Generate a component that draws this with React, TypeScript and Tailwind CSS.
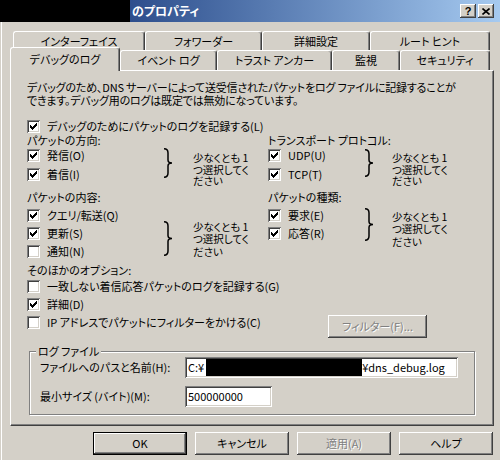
import React from 'react';

// classic 3D bevels
const raised =
  'shadow-[inset_-1px_-1px_#404040,inset_1px_1px_#ffffff,inset_-2px_-2px_#808080,inset_2px_2px_#d4d0c8]';
const sunken =
  'shadow-[inset_1px_1px_#808080,inset_-1px_-1px_#ffffff,inset_2px_2px_#404040,inset_-2px_-2px_#d4d0c8]';
const tabBase =
  'bg-[#d4d0c8] flex items-center justify-center border-l border-t border-white border-r border-r-[#404040] rounded-t-[3px] shadow-[inset_-1px_0_#808080] whitespace-nowrap';

const CheckMark = () => (
  <svg width="7" height="7" viewBox="0 0 7 7">
    {[2, 3, 4, 3, 2, 1, 0].map((y, x) => (
      <rect key={x} x={x} y={y} width="1" height="3" fill="#000" />
    ))}
  </svg>
);

const Check = ({ checked }: { checked: boolean }) => (
  <span className={`w-[13px] h-[13px] bg-white shrink-0 flex items-center justify-center ${sunken}`}>
    {checked && <CheckMark />}
  </span>
);

const CheckRow = ({ checked, label, h = 'h-[18px]' }: { checked: boolean; label: string; h?: string }) => (
  <div className={`flex items-center gap-[7px] whitespace-nowrap ${h}`}>
    <Check checked={checked} />
    <span>{label}</span>
  </div>
);

const Brace = ({ h, className = '' }: { h: number; className?: string }) => {
  const m = h / 2;
  return (
    <svg width="10" height={h} viewBox={`0 0 10 ${h}`} className={`shrink-0 ${className}`}>
      <path
        d={`M1 0.8 C4 0.8 5 2 5 5 L5 ${m - 3} C5 ${m - 1} 6 ${m} 9 ${m} C6 ${m} 5 ${m + 1} 5 ${m + 3} L5 ${h - 5} C5 ${h - 2} 4 ${h - 0.8} 1 ${h - 0.8}`}
        fill="none"
        stroke="#000"
        strokeWidth="1.5"
      />
    </svg>
  );
};

const Hint = ({ className }: { className: string }) => (
  <div className={`whitespace-nowrap text-[10.5px] ${className}`}>
    少なくとも 1
    <br />
    つ選択してく
    <br />
    ださい
  </div>
);

const Button = ({ children, disabled = false, def = false }: { children: React.ReactNode; disabled?: boolean; def?: boolean }) => (
  <div
    className={`w-[94px] h-[23px] flex items-center justify-center ${def ? 'border border-black' : ''} ${raised} ${
      disabled ? 'text-[#808080] [text-shadow:1px_1px_#ffffff]' : ''
    }`}
  >
    {children}
  </div>
);

export default function App() {
  return (
    <div className="w-[500px] h-[460px] bg-[#d4d0c8] overflow-hidden font-['Noto_Sans_CJK_JP',sans-serif] text-[11px] leading-none text-black [font-feature-settings:'palt'] select-none">
      {/* title bar */}
      <div className="h-[22px] flex items-center bg-gradient-to-r from-[#0a246a] to-[#a6caf0]">
        <div className="w-[130px] h-full bg-black" />
        <span className="ml-[2px] text-white font-bold text-[12px]">のプロパティ</span>
        <div className="ml-auto mr-[6px] flex gap-[2px]">
          <div className={`w-[16px] h-[14px] bg-[#d4d0c8] flex items-center justify-center font-bold text-[11px] font-['Liberation_Sans',sans-serif] ${raised}`}>
            ?
          </div>
          <div className={`w-[16px] h-[14px] bg-[#d4d0c8] flex items-center justify-center ${raised}`}>
            <svg width="8" height="7" viewBox="0 0 8 7">
              <path d="M0.5 0.5 L7.5 6.5 M7.5 0.5 L0.5 6.5" stroke="#000" strokeWidth="1.6" />
            </svg>
          </div>
        </div>
      </div>

      {/* dialog body */}
      <div className="pt-[9px] pl-[10px] h-[438px] shadow-[inset_1px_0_#d4d0c8,inset_2px_0_#ffffff]">
        {/* tab rows */}
        <div className="flex h-[19px] ml-[3px]">
          <div className={`${tabBase} w-[132px] h-[19px]`}>インターフェイス</div>
          <div className={`${tabBase} w-[117px] h-[19px]`}>フォワーダー</div>
          <div className={`${tabBase} w-[108px] h-[19px]`}>詳細設定</div>
          <div className={`${tabBase} w-[120px] h-[19px]`}>ルート ヒント</div>
        </div>
        <div className="flex items-end h-[20px]">
          <div className={`${tabBase} relative z-10 -mb-px w-[110px] h-[24px] pb-[1px]`}>デバッグのログ</div>
          <div className={`${tabBase} w-[97px] h-[20px]`}>イベント ログ</div>
          <div className={`${tabBase} w-[115px] h-[20px]`}>トラスト アンカー</div>
          <div className={`${tabBase} w-[68px] h-[20px]`}>監視</div>
          <div className={`${tabBase} w-[90px] h-[20px]`}>セキュリティ</div>
        </div>

        {/* tab page */}
        <div className="w-[484px] h-[356px] border-t border-l border-white border-r border-b border-r-[#404040] border-b-[#404040] shadow-[inset_-1px_-1px_#808080] pl-[16px] pt-[10px]">
          <div className="leading-[13px] whitespace-nowrap tracking-[-0.2px]">
            デバッグのため、DNS サーバーによって送受信されたパケットをログ ファイルに記録することが
            <br />
            できます。デバッグ用のログは既定では無効になっています。
          </div>

          <div className="mt-[11px]">
            <CheckRow checked label="デバッグのためにパケットのログを記録する(L)" h="h-[16px]" />
          </div>

          <div className="flex">
            {/* left column */}
            <div className="w-[241px]">
              <div className="h-[12px] flex items-center">パケットの方向:</div>
              <div className="flex">
                <div className="w-[136px]">
                  <CheckRow checked label="発信(O)" h="h-[19px]" />
                  <CheckRow checked label="着信(I)" h="h-[19px]" />
                </div>
                <Brace h={30} className="mt-[2px]" />
                <Hint className="ml-[20px] mt-[6px] leading-[11.5px]" />
              </div>
              <div className="mt-[4px] h-[14px] flex items-center">パケットの内容:</div>
              <div className="flex mt-[2px]">
                <div className="w-[136px]">
                  <CheckRow checked label="クエリ/転送(Q)" />
                  <CheckRow checked label="更新(S)" />
                  <CheckRow checked={false} label="通知(N)" />
                </div>
                <Brace h={35} className="mt-[14px]" />
                <Hint className="ml-[20px] mt-[14px] leading-[12.5px]" />
              </div>
            </div>

            {/* right column */}
            <div>
              <div className="h-[12px] flex items-center">トランスポート プロトコル:</div>
              <div className="flex">
                <div className="w-[96px]">
                  <CheckRow checked label="UDP(U)" h="h-[19px]" />
                  <CheckRow checked label="TCP(T)" h="h-[19px]" />
                </div>
                <Brace h={28} className="mt-[3px]" />
                <Hint className="ml-[18px] mt-[6px] leading-[11.5px]" />
              </div>
              <div className="mt-[4px] h-[14px] flex items-center">パケットの種類:</div>
              <div className="flex mt-[2px]">
                <div className="w-[96px]">
                  <CheckRow checked label="要求(E)" />
                  <CheckRow checked label="応答(R)" />
                </div>
                <Brace h={33} className="mt-[1px]" />
                <Hint className="ml-[18px] mt-[4px] leading-[12.5px]" />
              </div>
            </div>
          </div>

          <div className="mt-[3px] h-[14px] flex items-center">そのほかのオプション:</div>
          <CheckRow checked={false} label="一致しない着信応答パケットのログを記録する(G)" />
          <CheckRow checked label="詳細(D)" />
          <div className="flex items-start h-[18px]">
            <div className="w-[301px] h-[18px] flex items-center">
              <CheckRow checked={false} label="IP アドレスでパケットにフィルターをかける(C)" />
            </div>
            <div className={`mt-[1px] w-[99px] h-[23px] flex items-center justify-center text-[#808080] [text-shadow:1px_1px_#ffffff] ${raised}`}>
              フィルター(F)...
            </div>
          </div>

          {/* log file group */}
          <div className="relative mt-[19px] ml-[2px] w-[446px] border border-[#808080] shadow-[inset_1px_1px_#ffffff,1px_1px_#ffffff] pl-[10px] pt-[5px] pb-[7px]">
            <span className="absolute -top-[7px] left-[6px] px-[2px] bg-[#d4d0c8] leading-[13px]">ログ ファイル</span>
            <div className="flex items-center">
              <span className="w-[145px]">ファイルへのパスと名前(H):</span>
              <div className={`w-[273px] h-[21px] bg-white flex items-center pl-[3px] ${sunken}`}>
                <span>C:¥</span>
                <span className="ml-[2px] w-[156px] h-[17px] bg-black" />
                <span>¥dns_debug.log</span>
              </div>
            </div>
            <div className="flex items-center mt-[8px]">
              <span className="w-[145px]">最小サイズ (バイト)(M):</span>
              <div className={`w-[87px] h-[21px] bg-white flex items-center pl-[3px] ${sunken}`}>500000000</div>
            </div>
          </div>
        </div>

        {/* dialog buttons */}
        <div className="mt-[6px] flex justify-end gap-[8px] pr-[7px] -ml-[10px]">
          <Button def>OK</Button>
          <Button>キャンセル</Button>
          <Button disabled>適用(A)</Button>
          <Button>ヘルプ</Button>
        </div>
      </div>
    </div>
  );
}
